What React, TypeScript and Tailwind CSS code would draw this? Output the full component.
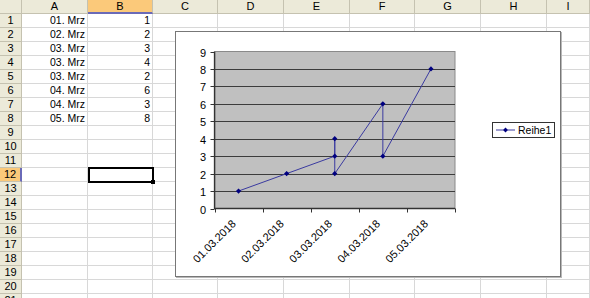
import React from "react";

const cols = [
  { name: "A", w: "w-[66px]" },
  { name: "B", w: "w-[65px]" },
  { name: "C", w: "w-[65px]" },
  { name: "D", w: "w-[66px]" },
  { name: "E", w: "w-[66px]" },
  { name: "F", w: "w-[65px]" },
  { name: "G", w: "w-[66px]" },
  { name: "H", w: "w-[66px]" },
  { name: "I", w: "flex-1" },
];

const dataA = ["01. Mrz", "02. Mrz", "03. Mrz", "03. Mrz", "03. Mrz", "04. Mrz", "04. Mrz", "05. Mrz"];
const dataB = [1, 2, 3, 4, 2, 6, 3, 8];
const dateIdx = [0, 1, 2, 2, 2, 3, 3, 4];
const labels = ["01.03.2018", "02.03.2018", "03.03.2018", "04.03.2018", "05.03.2018"];

const X0 = 38.5;
const X1 = 279;
const Y0 = 176.5;
const YT = 19.5;
const catW = (X1 - X0) / 5;
const yOf = (v: number) => Y0 - (v * (Y0 - YT)) / 9;
const cx = (i: number) => X0 + catW / 2 + catW * i;

function Chart() {
  const pts = dataB.map((v, i) => [cx(dateIdx[i]), yOf(v)] as [number, number]);
  const diamond = (x: number, y: number, r = 2.6) =>
    `M${x} ${y - r} L${x + r} ${y} L${x} ${y + r} L${x - r} ${y} Z`;
  return (
    <div className="absolute left-[175px] top-[31px] w-[386px] h-[246px] bg-white border border-[#777] shadow-[1px_1px_0_#b8b8b8] z-20">
      <svg width="384" height="244" className="block" style={{ fontFamily: '"Liberation Sans", Arial, sans-serif' }}>
        <rect x={39} y={YT} width={X1 - 39} height={Y0 - YT} fill="#c0c0c0" stroke="#8a8a8a" strokeWidth={1} />
        {Array.from({ length: 8 }, (_, k) => k + 1).map((v) => (
          <line key={v} x1={39} x2={X1} y1={Math.round(yOf(v)) + 0.5} y2={Math.round(yOf(v)) + 0.5} stroke="#3c3c3c" strokeWidth={1} />
        ))}
        <line x1={X0} x2={X0} y1={YT} y2={Y0 + 0.5} stroke="#333" strokeWidth={1.3} />
        <line x1={X0} x2={X1} y1={Y0} y2={Y0} stroke="#333" strokeWidth={1.3} />
        {Array.from({ length: 10 }, (_, v) => v).map((v) => (
          <g key={v}>
            <line x1={34.5} x2={X0} y1={Math.round(yOf(v)) + 0.5} y2={Math.round(yOf(v)) + 0.5} stroke="#333" />
            <text x={30} y={Math.round(yOf(v)) + 4.5} fontSize={11} textAnchor="end" fill="#000">
              {v}
            </text>
          </g>
        ))}
        {Array.from({ length: 6 }, (_, k) => k).map((k) => (
          <line key={k} x1={Math.round(X0 + catW * k) + 0.5} x2={Math.round(X0 + catW * k) + 0.5} y1={Y0} y2={Y0 + 4} stroke="#333" />
        ))}
        {labels.map((l, i) => (
          <text
            key={l}
            x={cx(i) - 2}
            y={Y0 + 16}
            fontSize={11}
            textAnchor="end"
            transform={`rotate(-45 ${cx(i) - 2} ${Y0 + 16})`}
            fill="#000"
          >
            {l}
          </text>
        ))}
        <polyline points={pts.map((p) => p.join(",")).join(" ")} fill="none" stroke="#3a3aa0" strokeWidth={1} />
        {pts.map((p, i) => (
          <path key={i} d={diamond(p[0], p[1])} fill="#000080" />
        ))}
        <rect x={316.5} y={90.5} width={62} height={15} fill="#fff" stroke="#333" />
        <line x1={320} x2={339} y1={98} y2={98} stroke="#3a3aa0" />
        <path d={diamond(329.5, 98, 2.4)} fill="#000080" />
        <text x={342} y={102} fontSize={10.5} fill="#000">
          Reihe1
        </text>
      </svg>
    </div>
  );
}

export default function App() {
  const rows = Array.from({ length: 21 }, (_, i) => i + 1);
  return (
    <div
      className="relative w-[590px] h-[298px] overflow-hidden bg-white text-black"
      style={{ fontFamily: '"Liberation Sans", Arial, sans-serif' }}
    >
      <div className="flex h-[14px]">
        <div className="w-[22px] h-full bg-[#ecead9] border-r border-b border-[#c5c2b0]" />
        {cols.map((c) => (
          <div
            key={c.name}
            className={`${c.w} h-full flex items-center justify-center text-[11px] leading-none border-r ${
              c.name === "B"
                ? "bg-[#fbc97a] border-b-2 border-b-[#6a6ab8] border-r-[#c5c2b0]"
                : "bg-[#ecead9] border-b border-[#c5c2b0]"
            }`}
          >
            {c.name}
          </div>
        ))}
      </div>
      {rows.map((r) => (
        <div key={r} className="flex h-[14px]">
          <div
            className={`w-[22px] h-full flex items-center justify-center text-[11px] leading-none border-b ${
              r === 12
                ? "bg-[#fbc97a] border-r-2 border-r-[#6a6ab8] border-b-[#c5c2b0]"
                : "bg-[#ecead9] border-r border-[#c5c2b0]"
            }`}
          >
            {r}
          </div>
          {cols.map((c) => (
            <div
              key={c.name}
              className={`${c.w} relative h-full border-r border-b border-[#d8d8d8] flex items-center justify-end pr-[2px] text-[10.5px] leading-none`}
            >
              {c.name === "A" && r <= 8 ? dataA[r - 1] : null}
              {c.name === "B" && r <= 8 ? dataB[r - 1] : null}
              {c.name === "B" && r === 12 ? (
                <div className="absolute left-0 -top-[1px] w-[66px] h-[16px] border-2 border-black z-10">
                  <div className="absolute -right-[3px] -bottom-[3px] w-[4px] h-[4px] bg-black" />
                </div>
              ) : null}
            </div>
          ))}
        </div>
      ))}
      <Chart />
    </div>
  );
}
